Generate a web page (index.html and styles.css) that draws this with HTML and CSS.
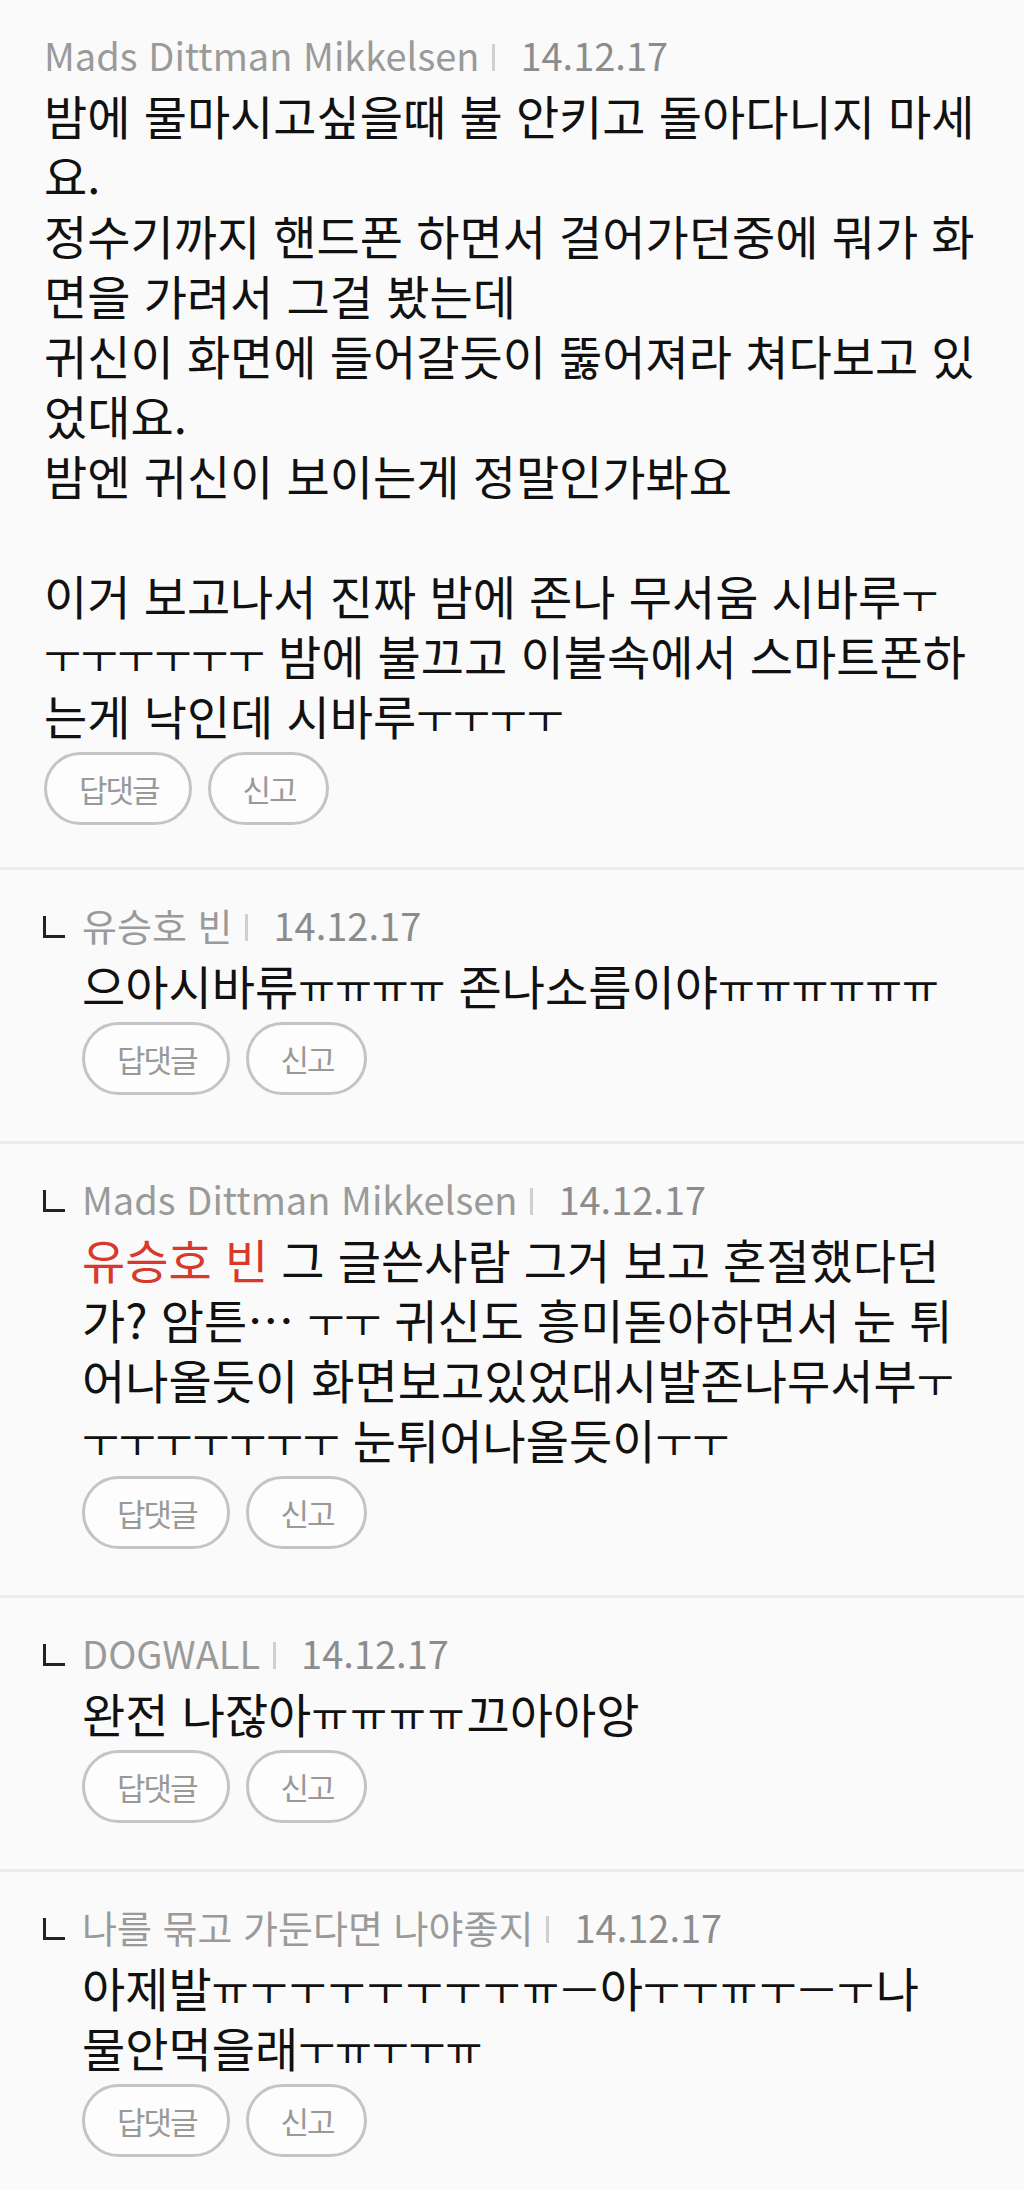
FILE: index.html
```html
<!DOCTYPE html>
<html lang="ko">
<head>
  <meta charset="UTF-8" />
  <meta name="viewport" content="width=device-width, initial-scale=1.0"/>
  <title>댓글</title>
  <link rel="stylesheet" href="styles.css">
</head>
<body>

  <ul class="comments">
    <li class="comment">
      <div class="meta">
        <span class="name">Mads Dittman Mikkelsen</span>
        <span class="sep"></span>
        <span class="date">14.12.17</span>
      </div>
      <p class="text">밤에 물마시고싶을때 불 안키고 돌아다니지 마세<br>요.<br>정수기까지 핸드폰 하면서 걸어가던중에 뭐가 화<br>면을 가려서 그걸 봤는데<br>귀신이 화면에 들어갈듯이 뚫어져라 쳐다보고 있<br>었대요.<br>밤엔 귀신이 보이는게 정말인가봐요<br><br>이거 보고나서 진짜 밤에 존나 무서움 시바루<span class="j">ㅜ</span><br><span class="j">ㅜㅜㅜㅜㅜㅜ</span> 밤에 불끄고 이불속에서 스마트폰하<br>는게 낙인데 시바루<span class="j">ㅜㅜㅜㅜ</span></p>
      <div class="actions">
        <button class="btn">답댓글</button>
        <button class="btn">신고</button>
      </div>
    </li>

    <li class="comment reply">
      <div class="meta">
        <span class="mark"></span>
        <span class="name">유승호 빈</span>
        <span class="sep"></span>
        <span class="date">14.12.17</span>
      </div>
      <p class="text">으아시바류<span class="j">ㅠㅠㅠㅠ</span> 존나소름이야<span class="j">ㅠㅠㅠㅠㅠㅠ</span></p>
      <div class="actions">
        <button class="btn">답댓글</button>
        <button class="btn">신고</button>
      </div>
    </li>

    <li class="comment reply">
      <div class="meta">
        <span class="mark"></span>
        <span class="name">Mads Dittman Mikkelsen</span>
        <span class="sep"></span>
        <span class="date">14.12.17</span>
      </div>
      <p class="text"><span class="to">유승호 빈</span> 그 글쓴사람 그거 보고 혼절했다던<br>가? 암튼… <span class="j">ㅜㅜ</span> 귀신도 흥미돋아하면서 눈 튀<br>어나올듯이 화면보고있었대시발존나무서부<span class="j">ㅜ</span><br><span class="j">ㅜㅜㅜㅜㅜㅜㅜ</span> 눈튀어나올듯이<span class="j">ㅜㅜ</span></p>
      <div class="actions">
        <button class="btn">답댓글</button>
        <button class="btn">신고</button>
      </div>
    </li>

    <li class="comment reply">
      <div class="meta">
        <span class="mark"></span>
        <span class="name">DOGWALL</span>
        <span class="sep"></span>
        <span class="date">14.12.17</span>
      </div>
      <p class="text">완전 나잖아<span class="j loose">ㅠㅠㅠㅠ</span>끄아아앙</p>
      <div class="actions">
        <button class="btn">답댓글</button>
        <button class="btn">신고</button>
      </div>
    </li>

    <li class="comment reply">
      <div class="meta">
        <span class="mark"></span>
        <span class="name">나를 묶고 가둔다면 나야좋지</span>
        <span class="sep"></span>
        <span class="date">14.12.17</span>
      </div>
      <p class="text">아제발<span class="j loose">ㅠㅜㅜㅜㅜㅜㅜㅜㅠㅡ</span>아<span class="j loose">ㅜㅜㅠㅜㅡㅜ</span>나<br>물안먹을래<span class="j">ㅜㅠㅜㅜㅠ</span></p>
      <div class="actions">
        <button class="btn">답댓글</button>
        <button class="btn">신고</button>
      </div>
    </li>
  </ul>

</body>
</html>
```

FILE: styles.css
```css
body {
  margin: 0;
  background-color: #fafafa;
  color: #111;
  font-family: "Noto Sans CJK KR", "Noto Sans", sans-serif;
}

.comments {
  list-style: none;
  margin: 0;
  padding: 0;
}

.comment {
  padding: 29px 44px 42px;
  border-bottom: 3px solid #ebebeb;
}

.comment.reply {
  padding-left: 82px;
  padding-bottom: 46px;
}

.meta {
  display: flex;
  align-items: center;
  height: 50px;
  font-size: 38px;
  color: #9a9a9a;
  white-space: nowrap;
}

.mark {
  width: 19px;
  height: 19px;
  margin: 6px 17px 0 -39px;
  border-left: 3px solid #222;
  border-bottom: 3px solid #222;
}

.sep {
  width: 3px;
  height: 27px;
  margin: 6px 25px 0 13px;
  background: #d0d0d0;
}

.date {
  color: #8c8c8c;
}

.text {
  margin: 6px 0 0;
  font-size: 47px;
  line-height: 60px;
  white-space: nowrap;
}

/* jamo (ㅜ ㅠ) are narrower than full syllables */
.j {
  font-size: 40px;
  line-height: 1;
  vertical-align: 2px;
}

.j.loose {
  letter-spacing: 2px;
}

.to {
  color: #d8392b;
}

.actions {
  display: flex;
  gap: 16px;
  margin-top: 7px;
}

.btn {
  height: 73px;
  padding: 0 30px 0 32px;
  border: 3px solid #c4c4c4;
  border-radius: 37px;
  background: #fdfdfd;
  color: #999;
  font-family: inherit;
  font-size: 31px;
  letter-spacing: -2px;
}
```
